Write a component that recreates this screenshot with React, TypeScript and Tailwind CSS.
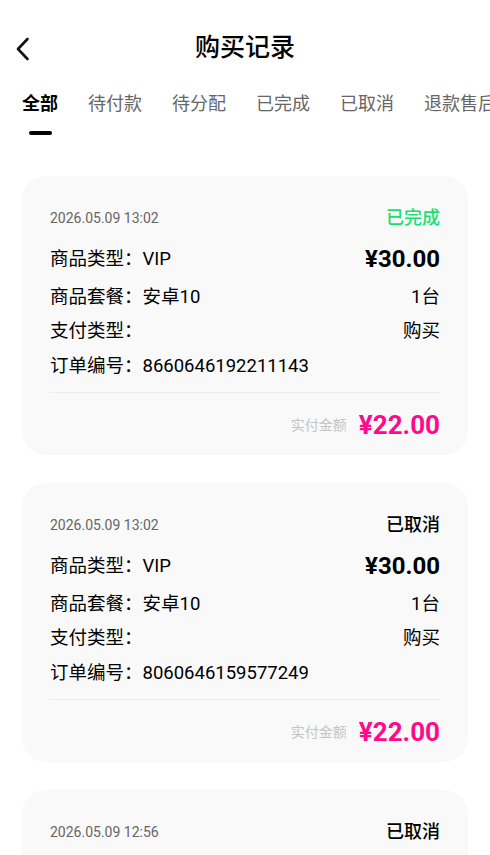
const tabs = ["全部", "待付款", "待分配", "已完成", "已取消", "退款售后"];

type Order = {
  time: string;
  status: string;
  done: boolean;
  type: string;
  price: string;
  plan: string;
  count: string;
  payType: string;
  no: string;
  paid: string;
};

const orders: Order[] = [
  {
    time: "2026.05.09 13:02",
    status: "已完成",
    done: true,
    type: "VIP",
    price: "¥30.00",
    plan: "安卓10",
    count: "1台",
    payType: "购买",
    no: "8660646192211143",
    paid: "¥22.00",
  },
  {
    time: "2026.05.09 13:02",
    status: "已取消",
    done: false,
    type: "VIP",
    price: "¥30.00",
    plan: "安卓10",
    count: "1台",
    payType: "购买",
    no: "8060646159577249",
    paid: "¥22.00",
  },
  {
    time: "2026.05.09 12:56",
    status: "已取消",
    done: false,
    type: "VIP",
    price: "¥30.00",
    plan: "安卓10",
    count: "1台",
    payType: "购买",
    no: "8060646150318826",
    paid: "¥22.00",
  },
];

export default function App() {
  return (
    <div className="h-[855px] w-[490px] overflow-hidden bg-white font-['Roboto','Noto_Sans_CJK_SC',sans-serif] text-black">
      <header className="relative flex h-[96px] items-start justify-center pt-[32px]">
        <button type="button" className="absolute left-[11px] top-[34px] p-[2px]">
          <svg width="20" height="26" viewBox="0 0 20 26" fill="none">
            <path d="M14.5 3 L5 13 L14.5 23" stroke="#111" strokeWidth="2.6" strokeLinecap="round" strokeLinejoin="round" />
          </svg>
        </button>
        <h1 className="text-[25px] leading-[32px] font-medium">购买记录</h1>
      </header>

      <nav className="-mt-[4px] flex gap-[30px] overflow-hidden whitespace-nowrap pl-[22px]">
        {tabs.map((t, i) => (
          <div key={t} className="flex shrink-0 flex-col items-center">
            <span
              className={
                i === 0
                  ? "text-[18px] leading-[24px] font-bold text-black"
                  : "text-[18px] leading-[24px] text-[#666]"
              }
            >
              {t}
            </span>
            <span
              className={
                i === 0
                  ? "mt-[15px] h-[4px] w-[23px] rounded-full bg-black"
                  : "mt-[15px] h-[4px] w-[23px]"
              }
            />
          </div>
        ))}
      </nav>

      <main className="mt-[41px] flex flex-col gap-[28px] px-[22px]">
        {orders.map((o, i) => (
          <OrderCard key={i} order={o} />
        ))}
      </main>
    </div>
  );
}

function OrderCard({ order }: { order: Order }) {
  return (
    <section className="rounded-[24px] bg-[#f9f9f9] px-[28px] pt-[32px] pb-[14px]">
      <div className="flex items-center justify-between">
        <span className="text-[14px] leading-[20px] text-[#666]">{order.time}</span>
        <span
          className={
            order.done
              ? "text-[18px] leading-[20px] font-medium text-[#16e06f]"
              : "text-[18px] leading-[20px] font-medium text-black"
          }
        >
          {order.status}
        </span>
      </div>
      <div className="mt-[16px] flex items-center justify-between">
        <span className="text-[18.5px] leading-[30px]">商品类型：{order.type}</span>
        <span className="text-[24px] leading-[30px] font-bold">{order.price}</span>
      </div>
      <div className="mt-[8px] flex items-center justify-between text-[18.5px] leading-[30px]">
        <span>商品套餐：{order.plan}</span>
        <span>{order.count}</span>
      </div>
      <div className="mt-[4px] flex items-center justify-between text-[18.5px] leading-[30px]">
        <span>支付类型：</span>
        <span>{order.payType}</span>
      </div>
      <div className="mt-[5px] flex items-center text-[18.5px] leading-[30px]">
        <span>订单编号：{order.no}</span>
      </div>
      <div className="mt-[11px] h-px bg-[#ececec]" />
      <div className="mt-[16px] flex items-center justify-end gap-[12px]">
        <span className="text-[14px] leading-[20px] text-[#c4c4c4]">实付金额</span>
        <span className="text-[26px] leading-[32px] font-bold text-[#ff0a8c]">{order.paid}</span>
      </div>
    </section>
  );
}
